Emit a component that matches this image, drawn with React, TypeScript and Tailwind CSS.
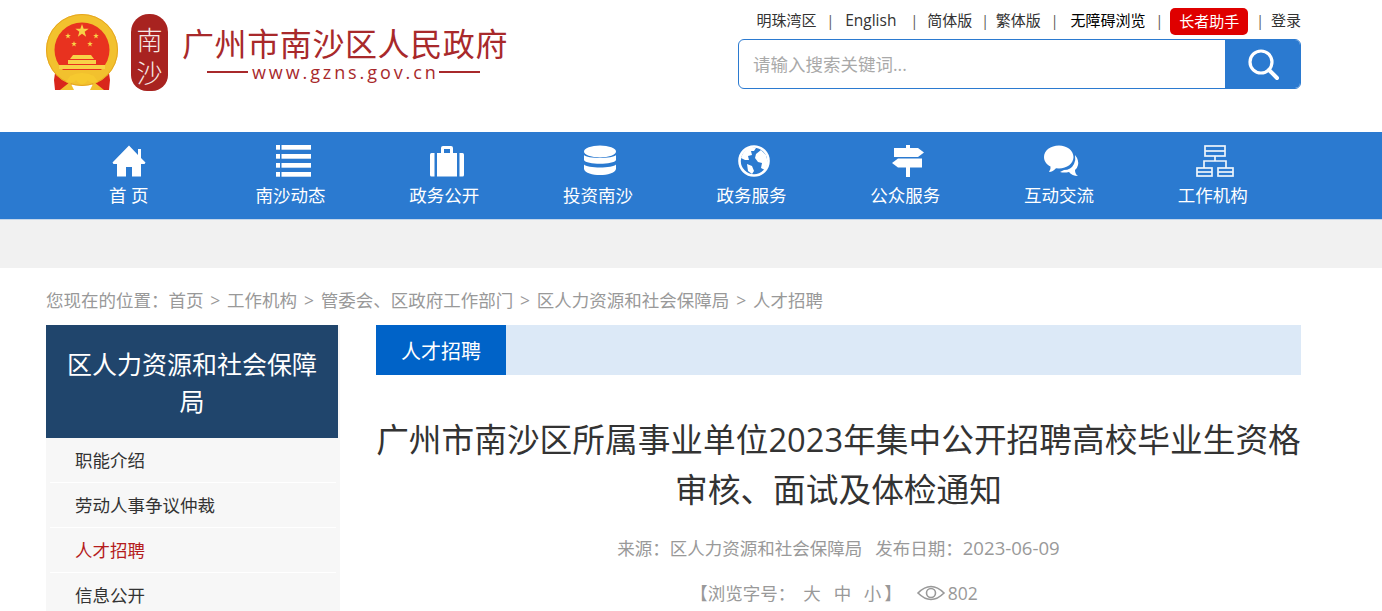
import React from "react";

const FONT = '"Open Sans", "Noto Sans CJK SC", sans-serif';

function Star({ cx, cy, r, rot = 0 }: { cx: number; cy: number; r: number; rot?: number }) {
  const pts: string[] = [];
  for (let i = 0; i < 10; i++) {
    const a = (Math.PI / 5) * i - Math.PI / 2 + rot;
    const rr = i % 2 === 0 ? r : r * 0.4;
    pts.push(`${(cx + rr * Math.cos(a)).toFixed(2)},${(cy + rr * Math.sin(a)).toFixed(2)}`);
  }
  return <polygon points={pts.join(" ")} fill="#f8d247" />;
}

function Emblem() {
  return (
    <svg width="72" height="78" viewBox="0 0 72 78" className="shrink-0">
      <path d="M10 52 L8 66 L9 76 L20 76 L28 68 L16 58 Z" fill="#d9261c" />
      <path d="M62 52 L64 66 L63 76 L52 76 L44 68 L56 58 Z" fill="#d9261c" />
      <circle cx="36" cy="36" r="36" fill="#f2c12e" />
      <circle cx="36" cy="36" r="35.500" fill="none" stroke="#e6a620" strokeWidth="1" />
      <circle cx="36" cy="36" r="27.500" fill="#e8321f" />
      <Star cx={36} cy={17} r={7} />
      <Star cx={22} cy={22} r={3} />
      <Star cx={50} cy={22} r={3} />
      <Star cx={28} cy={30} r={3} />
      <Star cx={44} cy={30} r={3} />
      <path d="M27 41 L45 41 L48 45 L24 45 Z" fill="#f8d247" />
      <rect x="22" y="46" width="28" height="4" fill="#f8d247" />
      <rect x="13" y="51" width="46" height="4" fill="#f8d247" />
      <path d="M14 56 L58 56 L52 62 L20 62 Z" fill="#f2c12e" />
      <path d="M24 62 Q36 56 48 62 L52 68 Q44 70 42 66 Q36 74 30 66 Q28 70 20 68 Z" fill="#f6c92f" />
      <path d="M14 76 L24 68 L28 76 Z M58 76 L48 68 L44 76 Z" fill="#f2c12e" />
    </svg>
  );
}

function Seal() {
  return (
    <div className="w-[37px] h-[77px] shrink-0 bg-[#a82320] rounded-t-[18px] rounded-b-[16px] flex flex-col items-center justify-center gap-[7px] pt-[7px] ml-[13px] text-[#f5e9e6]">
      <span className="block text-[26px] leading-[26px] font-light">南</span>
      <span className="block text-[26px] leading-[26px] font-light">沙</span>
    </div>
  );
}

const icons: Record<string, React.ReactNode> = {
  home: (
    <svg width="34" height="32" viewBox="0 0 34 32" fill="#fff">
      <path d="M17 0.500 L0.500 17.500 L1.500 19 L5 19 V31.500 H14 V22 H20 V31.500 H29 V19 H32.500 L33.500 17.500 L29 13 V4 H26 V10 Z" />
    </svg>
  ),
  list: (
    <svg width="35" height="32" viewBox="0 0 35 32" fill="#fff">
      <rect x="0" y="0" width="4" height="4.700" /><rect x="5.500" y="0" width="29.500" height="4.700" />
      <rect x="0" y="9" width="4" height="4.700" /><rect x="5.500" y="9" width="29.500" height="4.700" />
      <rect x="0" y="18" width="4" height="4.700" /><rect x="5.500" y="18" width="29.500" height="4.700" />
      <rect x="0" y="27" width="4" height="4.700" /><rect x="5.500" y="27" width="29.500" height="4.700" />
    </svg>
  ),
  case: (
    <svg width="34" height="32" viewBox="0 0 34 32" fill="#fff">
      <path d="M1.500 8 H4.500 V31.500 H1.500 Q0 31.500 0 30 V9.500 Q0 8 1.500 8 Z" />
      <path d="M29.500 8 H32.500 Q34 8 34 9.500 V30 Q34 31.500 32.500 31.500 H29.500 Z" />
      <path fillRule="evenodd" d="M7 8 H11 V3 Q11 1 13 1 H21 Q23 1 23 3 V8 H27 V31.500 H7 Z M14 8 H20 V4 H14 Z" />
    </svg>
  ),
  db: (
    <svg width="32" height="32" viewBox="0 0 32 32" fill="#fff">
      <ellipse cx="16" cy="6.500" rx="16" ry="6" />
      <path d="M0 10 C3 14 29 14 32 10 V15 C30 20 2 20 0 15 Z" />
      <path d="M0 19.500 C3 23.500 29 23.500 32 19.500 V24 C30 32 2 32 0 24 Z" />
    </svg>
  ),
  globe: (
    <svg width="32" height="32" viewBox="0 0 32 32">
      <circle cx="16" cy="16" r="14.500" fill="none" stroke="#fff" strokeWidth="2.600" />
      <path d="M3 13 Q5 5 13 2 L18 3 L16 6 L13 6 L14 10 L10 11 L11 15 L7 15 Z" fill="#fff" />
      <path d="M18 9 L23 5 L28 10 L30 18 L27 25 L23 23 L24 18 L20 17 L17 13 Z" fill="#fff" />
      <path d="M9 19 L14 21 L16 26 L14 29 L10 26 Z" fill="#fff" />
    </svg>
  ),
  sign: (
    <svg width="32" height="32" viewBox="0 0 32 32" fill="#fff">
      <rect x="14" y="0" width="4" height="32" />
      <path d="M2 3 H26 L32 7.500 L26 12 H2 Z" />
      <path d="M6 13.500 H30 V22.500 H6 L0 18 Z" />
      <rect x="14" y="12" width="4" height="1.500" fill="#2b7ad0" />
    </svg>
  ),
  chat: (
    <svg width="35" height="32" viewBox="0 0 35 32" fill="#fff">
      <path d="M31 10 Q35 15 34 20 Q33 24 31 25 Q31 29 34 31 Q28 31 25 27 Q20 28 16 27 L20 25 Q27 25 30 19 Q32 15 31 10 Z" />
      <path d="M15 0.500 C23 0.500 29.500 5.500 29.500 12 C29.500 18.500 23 23.500 15 23.500 L12 23.300 Q9 27 5 27 Q7 24.500 6.500 21.500 C2.500 19.500 0 16 0 12 C0 5.500 6.500 0.500 15 0.500 Z" />
    </svg>
  ),
  tree: (
    <svg width="38" height="32" viewBox="0 0 38 32" fill="none" stroke="#fff" strokeWidth="1.700" opacity="0.92">
      <rect x="9" y="1" width="20" height="10" />
      <path d="M9 6 H29" />
      <path d="M19 11 V16 M8 23 V16 H30 V23" />
      <rect x="1" y="23" width="15" height="8" />
      <path d="M1 27 H16" />
      <rect x="22" y="23" width="15" height="8" />
      <path d="M22 27 H37" />
    </svg>
  ),
};

const navItems = [
  { icon: "home", label: "首 页", first: true },
  { icon: "list", label: "南沙动态" },
  { icon: "case", label: "政务公开" },
  { icon: "db", label: "投资南沙" },
  { icon: "globe", label: "政务服务" },
  { icon: "sign", label: "公众服务" },
  { icon: "chat", label: "互动交流" },
  { icon: "tree", label: "工作机构" },
];

function Sep({ className = "" }: { className?: string }) {
  return <span className={`text-[#555] text-[14px] ${className}`}>|</span>;
}

export default function App() {
  return (
    <div className="h-[611px] overflow-hidden bg-white" style={{ fontFamily: FONT }}>
      {/* Header */}
      <header className="h-[132px] flex justify-between pl-[46px] pr-[81px]">
        <div className="flex pt-[14px] items-start">
          <Emblem />
          <Seal />
          <div className="ml-[14px] mt-[14px] flex flex-col items-start text-[#a8292b]">
            <div className="text-[32px] leading-[32px] tracking-[0.6px] whitespace-nowrap">广州市南沙区人民政府</div>
            <div className="ml-[25px] mt-[2px] flex items-center h-[20px] text-[18px] tracking-[2.900px] whitespace-nowrap">
              <span className="w-[41px] h-[2px] bg-[#a8292b] mr-[4px]" />
              www.gzns.gov.cn
              <span className="w-[41px] h-[2px] bg-[#a8292b] ml-[0px]" />
            </div>
          </div>
        </div>
        <div className="w-[563px] flex flex-col">
          <div className="h-[39px] flex items-start pt-[7px] justify-end text-[15px] leading-[27px] text-[#333] whitespace-nowrap">
            <span>明珠湾区</span>
            <Sep className="ml-[10px]" />
            <span className="ml-[11px] text-[15.500px]">English</span>
            <Sep className="ml-[14px]" />
            <span className="ml-[9px]">简体版</span>
            <Sep className="ml-[9px]" />
            <span className="ml-[7px]">繁体版</span>
            <Sep className="ml-[10px]" />
            <span className="ml-[12px] text-black">无障碍浏览</span>
            <Sep className="ml-[10px]" />
            <span className="ml-[7px] w-[78px] h-[27px] mt-[1px] rounded-[5px] bg-[#df0000] text-white text-center">长者助手</span>
            <Sep className="ml-[8px]" />
            <span className="ml-[7px]">登录</span>
          </div>
          <div className="h-[50px] flex border border-[#2b7ad0] rounded-[6px] overflow-hidden">
            <div className="flex-1 flex items-center pl-[14px] text-[17.500px] text-[#a9a9a9]">请输入搜索关键词...</div>
            <div className="w-[75px] bg-[#2b7ad0] flex items-center justify-center">
              <svg width="34" height="34" viewBox="0 0 34 34" fill="none" stroke="#fff">
                <circle cx="15" cy="15" r="11" strokeWidth="3.200" />
                <path d="M23 23 L31 31" strokeWidth="4" strokeLinecap="round" />
              </svg>
            </div>
          </div>
        </div>
      </header>

      {/* Nav */}
      <nav className="h-[88px] bg-[#2b7ad0] border-b border-[#c4d6ea] flex pl-[52px]">
        {navItems.map((n) => (
          <div key={n.icon} className={`w-[153.700px] flex flex-col items-center ${n.first ? "mr-[8px]" : ""}`}>
            <div className={`h-[32px] mt-[13px] flex items-center justify-center ${n.first ? "" : "pl-[5px]"}`}>{icons[n.icon]}</div>
            <div className="mt-[3px] text-[17.500px] leading-[30px] text-white whitespace-pre">{n.label}</div>
          </div>
        ))}
      </nav>

      {/* Grey band */}
      <div className="h-[48px] bg-[#f1f1f1]" />

      {/* Breadcrumb */}
      <div className="h-[57px] pl-[46px] flex items-start pt-[19px] text-[17.500px] leading-[26px] text-[#999] whitespace-pre">
        <span>您现在的位置：</span>
        <span>首页</span>
        <span className="mx-[6.800px]">&gt;</span>
        <span>工作机构</span>
        <span className="mx-[6.800px]">&gt;</span>
        <span>管委会、区政府工作部门</span>
        <span className="mx-[6.800px]">&gt;</span>
        <span>区人力资源和社会保障局</span>
        <span className="mx-[6.800px]">&gt;</span>
        <span>人才招聘</span>
      </div>

      {/* Main */}
      <main className="flex pl-[46px] pr-[81px]">
        <aside className="w-[294px] shrink-0 bg-[#f7f7f7] h-[286px]">
          <div className="w-[292px] h-[113px] bg-[#20456c] text-white text-[25px] leading-[37px] text-center px-[20px] py-[21px]">
            区人力资源和社会保障局
          </div>
          {[
            { t: "职能介绍", c: "text-[#333]" },
            { t: "劳动人事争议仲裁", c: "text-[#333]" },
            { t: "人才招聘", c: "text-[#b51d1d]" },
            { t: "信息公开", c: "text-[#333]" },
          ].map((r) => (
            <div key={r.t} className="mx-[4px]">
              <div className={`h-[45px] border-b border-white pl-[25px] text-[17.500px] leading-[44px] ${r.c}`}>{r.t}</div>
            </div>
          ))}
        </aside>

        <section className="flex-1 ml-[36px] min-w-0">
          <div className="h-[50px] bg-[#dce9f7]">
            <div className="w-[130px] h-[50px] bg-[#0063c8] text-white text-[20px] leading-[53px] text-center">人才招聘</div>
          </div>
          <h1 className="mt-[40px] -mx-[6px] text-[32.700px] leading-[50px] text-[#333] text-center font-normal">
            广州市南沙区所属事业单位2023年集中公开招聘高校毕业生资格审核、面试及体检通知
          </h1>
          <div className="mt-[18px] text-[17.500px] leading-[30px] text-[#999] text-center whitespace-pre">
            来源：区人力资源和社会保障局<span className="ml-[13px]">发布日期：<span className="text-[18.600px]">2023-06-09</span></span>
          </div>
          <div className="mt-[15px] text-[17.500px] leading-[30px] text-[#999] flex justify-center whitespace-pre pr-[9px]">
            <span>【浏览字号：</span>
            <span className="ml-[8px]">大</span>
            <span className="ml-[13px]">中</span>
            <span className="ml-[12.500px]">小</span>
            <span className="ml-[3px]">】</span>
            <svg className="ml-[15px] mt-[4px]" width="28" height="22" viewBox="0 0 28 22" fill="none" stroke="#999" strokeWidth="1.600">
              <path d="M1 11 Q14 -2 27 11 Q14 24 1 11 Z" />
              <circle cx="14" cy="11" r="4.500" />
            </svg>
            <span className="ml-[3px]">802</span>
          </div>
        </section>
      </main>
    </div>
  );
}
